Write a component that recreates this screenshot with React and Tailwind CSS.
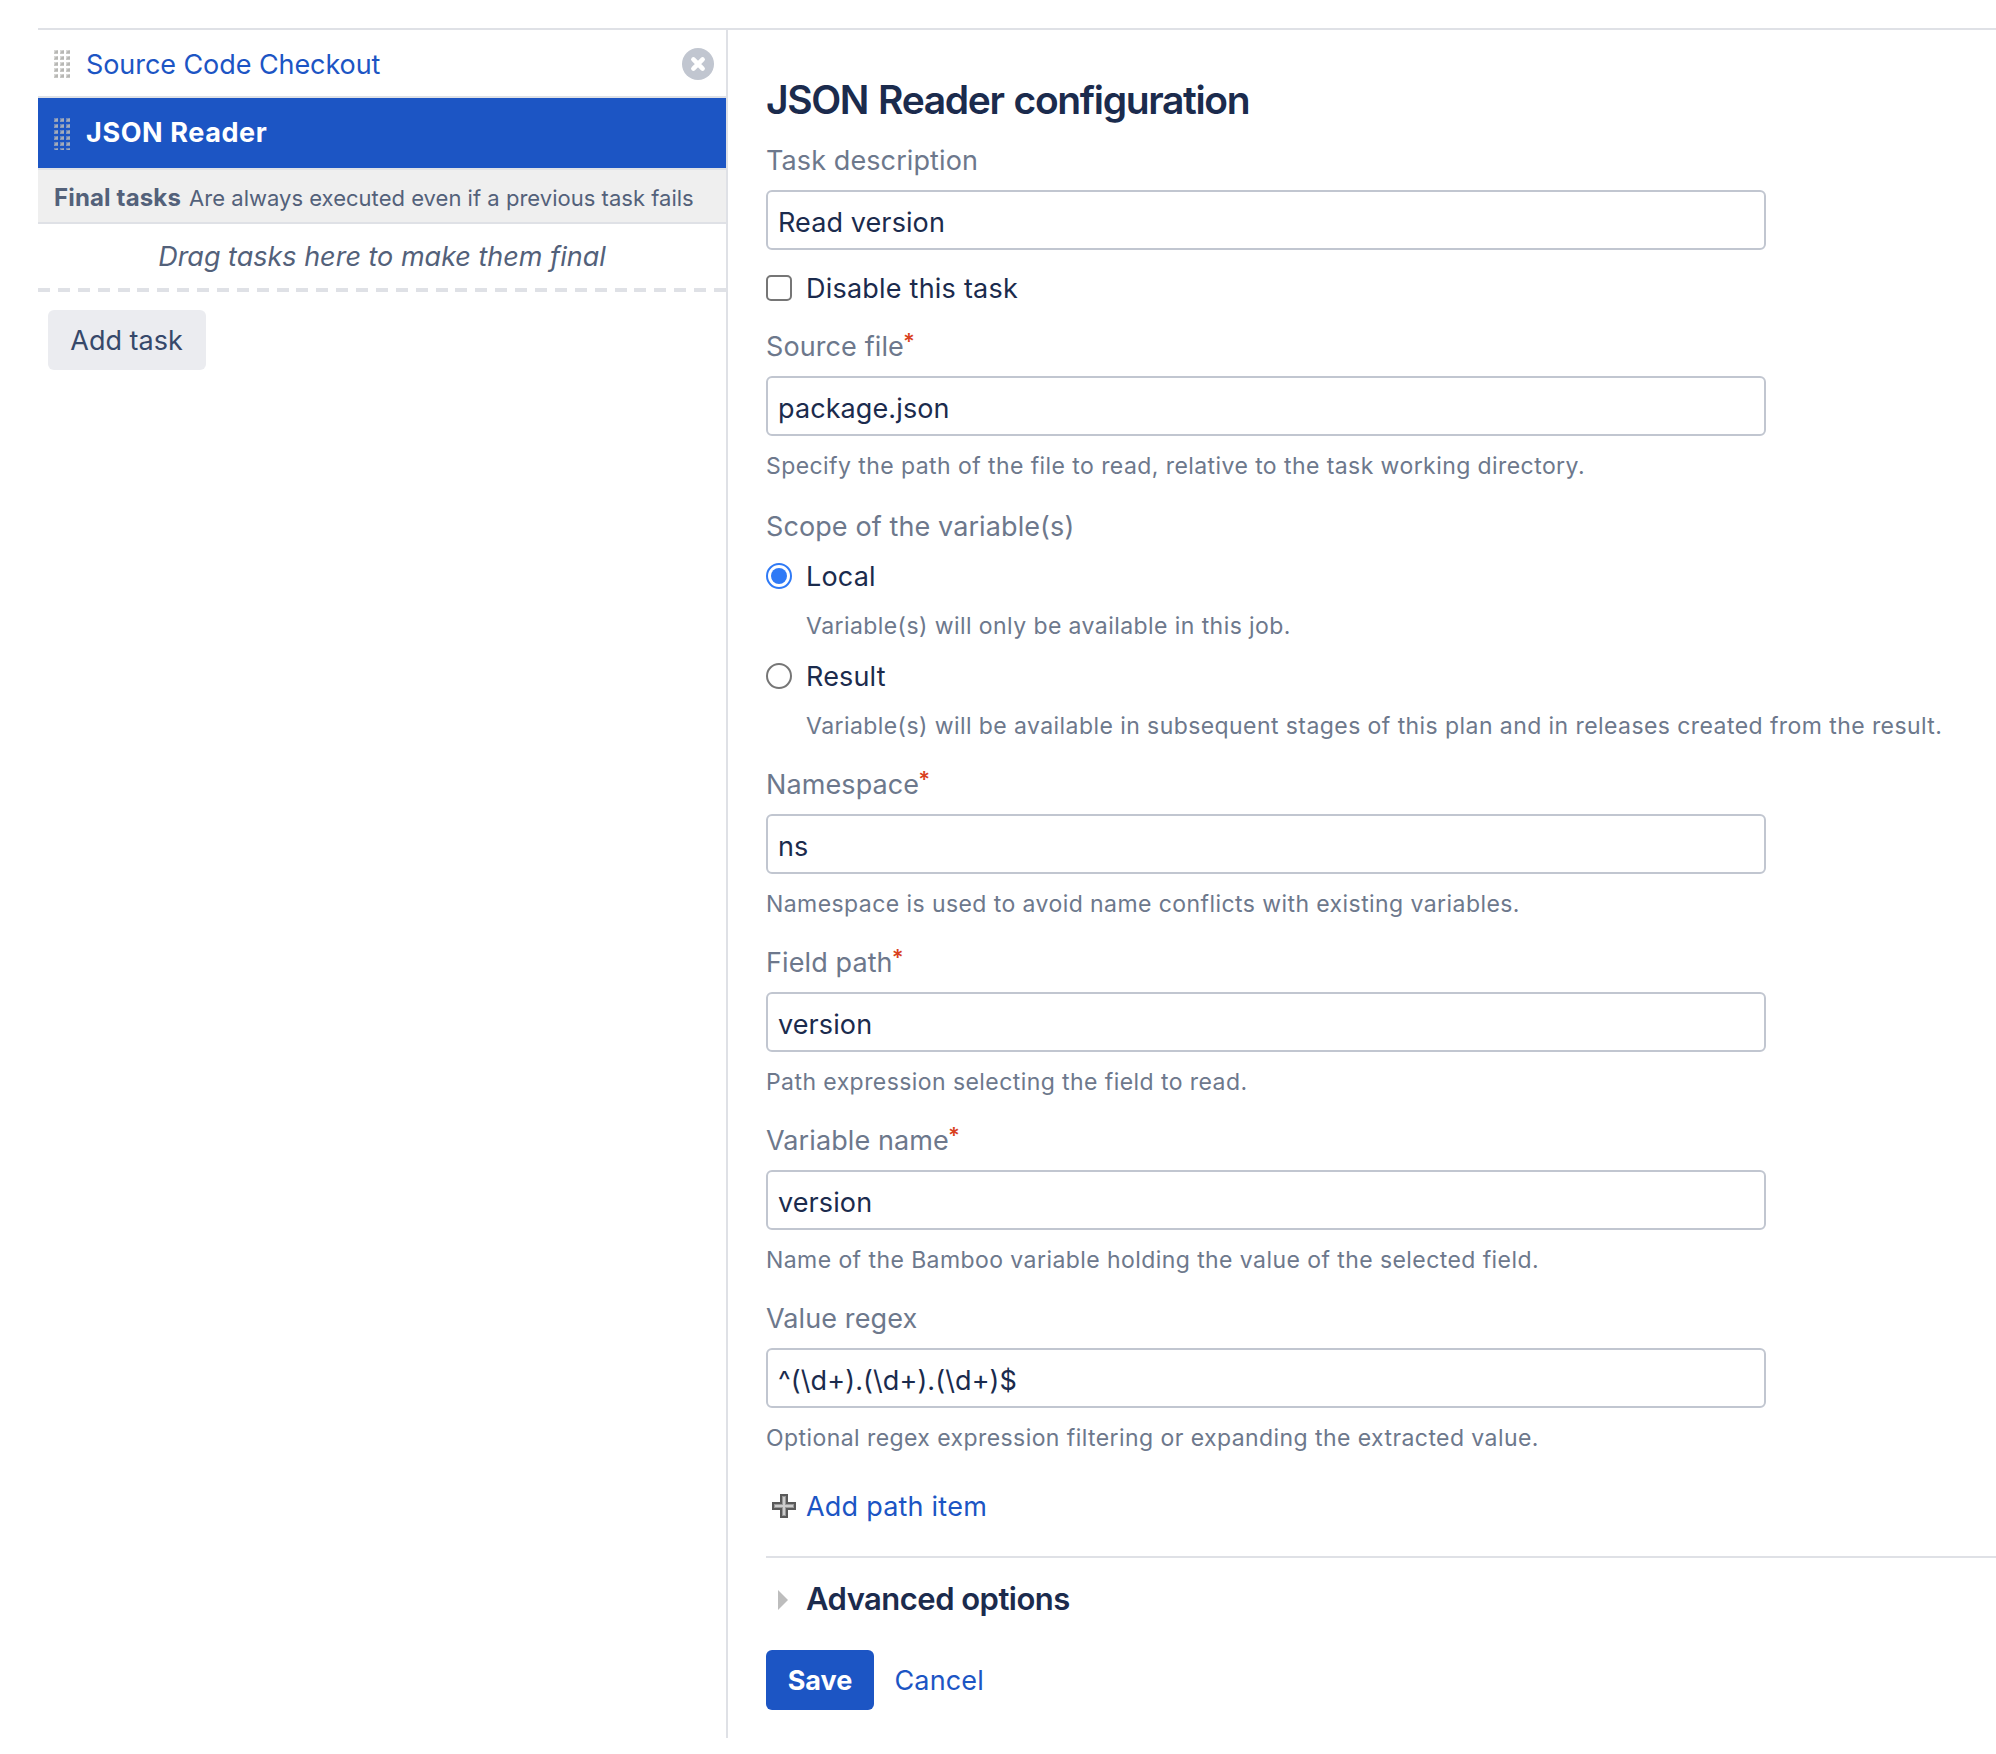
import React from "react";

function Grip({ rows, color }) {
  const dots = [];
  for (let r = 0; r < rows; r++) {
    for (let c = 0; c < 3; c++) dots.push([c * 6, r * 6]);
  }
  return (
    <svg width="16" height={rows === 5 ? 28 : 32} className="shrink-0">
      {dots.map(([x, y]) => (
        <g key={x + "-" + y} fill={color}>
          <rect x={x} y={y} width="4" height="4" opacity="0.45" />
          <path d={`M${x + 4} ${y}v4h-4v-1l1-1h1v-1l1-1z`} opacity="0.35" />
          <rect x={x + 1} y={y + 1} width="3" height="2" opacity="0.5" />
        </g>
      ))}
    </svg>
  );
}

function CloseIcon() {
  return (
    <svg width="32" height="32" viewBox="0 0 32 32" className="shrink-0">
      <circle cx="16" cy="16" r="16" fill="#c1c6d0" />
      <path d="M11.4 11.4l9.2 9.2M20.6 11.4l-9.2 9.2" stroke="#fff" strokeWidth="4.6" strokeLinecap="round" />
    </svg>
  );
}

function PlusIcon() {
  return (
    <svg width="24" height="24" viewBox="0 0 24 24" className="shrink-0">
      <path d="M8 0h8v8h8v8h-8v8H8v-8H0V8h8z" fill="#5a5a5a" />
      <path d="M10 2h4v8h8v4h-8v8h-4v-8H2v-4h8z" fill="#999999" />
      <path d="M11 3h2v8h8v2h-8v8h-2v-8H3v-2h8z" fill="#cccccc" />
    </svg>
  );
}

function Label({ children, required }) {
  return (
    <div className="-mb-0.5 text-[27px] leading-[38px] tracking-[0.1px] text-[#6d788c]">
      {children}
      {required && (
        <span className="relative -top-[7px] -left-px text-[22px] leading-none font-semibold text-[#d9411e]">*</span>
      )}
    </div>
  );
}

function TextInput({ value }) {
  return (
    <input
      type="text"
      defaultValue={value}
      className="mt-3 block h-[60px] w-[1000px] rounded-md border-2 border-[#c1c6d0] bg-white pt-1 pl-2.5 text-[27px] tracking-[0.1px] text-[#1b2b4d] outline-none"
    />
  );
}

function Help({ children }) {
  return <p className="text-[23px] leading-9 tracking-[0.425px] whitespace-nowrap text-[#6d788c]">{children}</p>;
}

function Field({ label, required, value, help }) {
  return (
    <div className="mt-[22px]">
      <Label required={required}>{label}</Label>
      <TextInput value={value} />
      <div className="mt-3">
        <Help>{help}</Help>
      </div>
    </div>
  );
}

function Radio({ label, checked, help }) {
  return (
    <div className="mt-3.5">
      <label className="flex h-9 items-center gap-3.5">
        <span
          className={
            checked
              ? "flex size-[26px] items-center justify-center rounded-full border-2 border-[#2f7af6]"
              : "size-[26px] rounded-full border-2 border-[#767676]"
          }
        >
          {checked && <span className="size-4 rounded-full bg-[#2f7af6]" />}
        </span>
        <span className="pt-0.5 text-[27px] leading-9 tracking-[0.17px]">{label}</span>
      </label>
      <div className="mt-3.5 pl-10">
        <Help>{help}</Help>
      </div>
    </div>
  );
}

function Sidebar() {
  return (
    <aside className="w-[690px] shrink-0 border-r-2 border-[#dfe1e6]">
      <div className="flex h-[68px] items-center border-b-2 border-[#dfe1e6] pt-0.5 pr-3 pl-4">
        <Grip rows={5} color="#a8a8a4" />
        <a className="ml-4 pt-0.5 text-[27px] leading-9 tracking-[-0.07px] text-[#1c55c4]">Source Code Checkout</a>
        <span className="ml-auto">
          <CloseIcon />
        </span>
      </div>
      <div className="flex h-[70px] items-center bg-[#1c55c4] pt-0.5 pl-4">
        <Grip rows={6} color="#c4c0b8" />
        <a className="ml-4 pb-0.5 text-[27px] leading-9 font-bold tracking-[0.6px] text-white">JSON Reader</a>
      </div>
      <div className="flex h-[56px] items-center border-y-2 border-[#dfe1e6] bg-[#efefef] pt-1 pl-4">
        <div className="flex items-baseline leading-9 whitespace-nowrap text-[#53617a]">
          <strong className="text-[24px] font-bold tracking-[0.16px]">Final tasks</strong>
          <span className="ml-2 text-[22px] tracking-[0.02px]">Are always executed even if a previous task fails</span>
        </div>
      </div>
      <div className="flex h-16 items-center justify-center pt-0.5 text-[27px] text-[#53617a] italic">
        Drag tasks here to make them final
      </div>
      <div className="h-1 bg-[repeating-linear-gradient(90deg,#dfe1e6_0px,#dfe1e6_12px,transparent_12px,transparent_19.88px)]" />
      <button className="mt-[18px] ml-2.5 block h-[60px] w-[158px] rounded-md bg-[#ebecf0] pt-0.5 pr-px text-[27px] text-[#36486a]">
        Add task
      </button>
    </aside>
  );
}

export default function App() {
  return (
    <div className="h-[1754px] overflow-hidden bg-white pt-7 pl-[38px] font-['Inter',sans-serif] text-[#1b2b4d]">
      <div className="flex border-t-2 border-[#dfe1e6]">
        <Sidebar />
        <main className="min-w-0 flex-1 pt-[46px] pb-7 pl-[38px]">
          <h2 className="text-[39px] leading-[48px] font-[570] tracking-[-1.36px] [word-spacing:1.5px]">
            JSON Reader configuration
          </h2>
          <div className="mt-[18px]">
            <Label>Task description</Label>
            <TextInput value="Read version" />
          </div>
          <label className="mt-5 flex h-9 items-center gap-3.5">
            <span className="size-[26px] rounded-[5px] border-2 border-[#767676]" />
            <span className="pt-0.5 text-[27px] leading-9 tracking-[0.22px]">Disable this task</span>
          </label>
          <Field
            label="Source file"
            required
            value="package.json"
            help="Specify the path of the file to read, relative to the task working directory."
          />
          <div className="mt-6">
            <Label>Scope of the variable(s)</Label>
            <Radio label="Local" checked help="Variable(s) will only be available in this job." />
            <Radio
              label="Result"
              help="Variable(s) will be available in subsequent stages of this plan and in releases created from the result."
            />
          </div>
          <Field
            label="Namespace"
            required
            value="ns"
            help="Namespace is used to avoid name conflicts with existing variables."
          />
          <Field label="Field path" required value="version" help="Path expression selecting the field to read." />
          <Field
            label="Variable name"
            required
            value="version"
            help="Name of the Bamboo variable holding the value of the selected field."
          />
          <Field
            label="Value regex"
            value="^(\d+).(\d+).(\d+)$"
            help="Optional regex expression filtering or expanding the extracted value."
          />
          <div className="mt-8 flex h-9 items-center gap-2.5 pl-1.5">
            <PlusIcon />
            <a className="pt-0.5 text-[27px] leading-9 tracking-[0.22px] text-[#1c55c4]">Add path item</a>
          </div>
          <div className="mt-8 border-t-2 border-[#dfe1e6] pt-[21px]">
            <div className="flex h-10 items-center pl-3">
              <svg width="10" height="22" viewBox="0 0 10 22" className="shrink-0">
                <path d="M0 2l10 10L0 22z" fill="#bdbdbd" />
              </svg>
              <h3 className="ml-[18px] text-[31px] leading-10 font-[580] tracking-[-0.52px]">Advanced options</h3>
            </div>
          </div>
          <div className="mt-[31px] flex h-[60px] items-center">
            <button className="h-[60px] w-[108px] rounded-md bg-[#1c55c4] pt-0.5 text-[27px] font-bold text-white">
              Save
            </button>
            <a className="ml-[20.5px] pt-0.5 text-[27px] leading-9 tracking-[0.14px] text-[#1c55c4]">Cancel</a>
          </div>
        </main>
      </div>
    </div>
  );
}
